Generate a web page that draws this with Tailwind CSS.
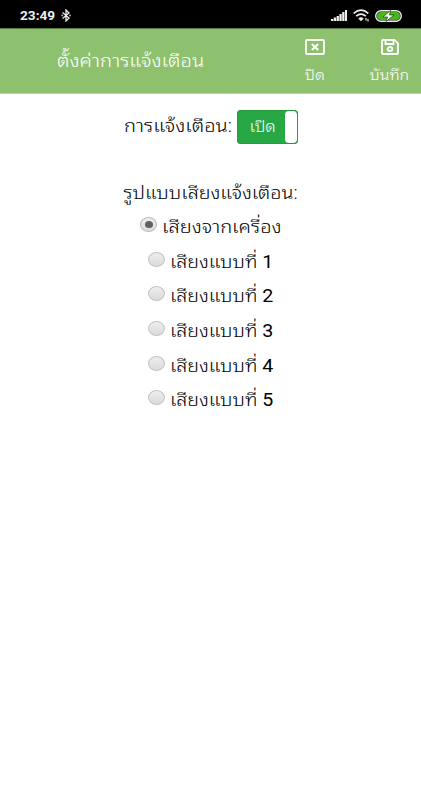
<!DOCTYPE html>
<html lang="th">
<head>
<meta charset="utf-8">
<meta name="viewport" content="width=device-width, initial-scale=1">
<title>ตั้งค่าการแจ้งเตือน</title>
<script src="https://cdn.jsdelivr.net/npm/@tailwindcss/browser@4"></script>
</head>
<body class="h-[800px] w-[421px] overflow-hidden bg-white font-['Roboto','Noto_Sans_Thai_Looped','Noto_Looped_Thai','Loma','Waree','Garuda',sans-serif] font-light text-black">
<div class="flex h-7 items-center justify-between bg-black pl-5 pr-[19px] pt-[3px] text-[#eee]">
  <div class="flex items-center gap-[5px]">
    <span class="w-[36px] whitespace-nowrap font-['Roboto'] text-[13px] font-bold leading-4"><span class="inline-block origin-left scale-x-[1.05]">23:49</span></span>
    <svg class="h-[13px] w-[10px]" viewBox="0 0 10 13" fill="none" stroke="currentColor" stroke-width="1.3"><path d="M1.5 3.5L8 9L5 12V1L8 4L1.5 9.5"/><path d="M.5 6.5h1.3M8.3 6.5h1.3" /></svg>
  </div>
  <div class="flex items-center">
    <svg class="h-[11px] w-[16px]" viewBox="0 0 16 11" fill="currentColor"><path d="M0 9h2.3v2H0zM2.8 7.5h2.3V11H2.8zM5.6 6h2.3v5H5.6zM8.4 4h2.3v7H8.4zM11.2 2h2.3v9h-2.3zM14 0h2v11h-2z"/></svg>
    <svg class="ml-[6px] h-[13px] w-[17px]" viewBox="0 0 17 13" fill="none" stroke="currentColor" stroke-width="1.7"><path d="M.7 4.4Q8 -2 15.3 4.4M3.2 7.2Q8 3 12.8 7.2"/><path d="M5.3 9.5Q8 7 10.7 9.5L8 12.3z" fill="currentColor" stroke="none"/><path d="M13 9v2.5M15 10v2.5" stroke-width="1.2"/></svg>
    <svg class="ml-[5px] h-[12px] w-[27px]" viewBox="0 0 27 12"><rect x=".7" y=".7" width="25.6" height="10.6" rx="5.3" fill="#111" stroke="#eee" stroke-width="1.4"/><rect x="2" y="2" width="23" height="8" rx="4" fill="#48b51c"/><path d="M15.5 .5L8 7h4.5l-1.5 4.5L19 5h-4.5z" fill="#fff" stroke="#173d08" stroke-width=".7"/></svg>
  </div>
</div>
<header class="flex h-[66px] border-b border-[#b5d59d] border-t border-t-[#557a3d] bg-[#8ec16d] text-white">
  <h1 class="w-[283px] pl-[57px] pt-[18px] text-[18px] leading-7 font-light whitespace-nowrap"><span class="inline-block origin-left scale-x-[1.12]">ตั้งค่าการแจ้งเตือน</span></h1>
  <button class="flex w-[63px] flex-col items-center pt-[10px]">
    <svg class="h-[16px] w-[20px]" viewBox="0 0 20 16" fill="none" stroke="currentColor"><rect x="1" y="1" width="18" height="14" rx="1" stroke-width="1.8"/><path d="M6.8 5l6.4 6M13.2 5l-6.4 6" stroke-width="2"/></svg>
    <span class="mt-[10px] text-[14px] leading-5"><span class="inline-block scale-x-[1.14]">ปิด</span></span>
  </button>
  <button class="ml-[12px] flex w-[63px] flex-col items-center pt-[10px]">
    <svg class="h-[16px] w-[18px]" viewBox="0 0 18 16" fill="none" stroke="currentColor" stroke-width="1.8"><path d="M2 1h11.5L17 4.3V14a1 1 0 0 1-1 1H2a1 1 0 0 1-1-1V2a1 1 0 0 1 1-1z"/><path d="M4.5 1v4h8V1"/><ellipse cx="9" cy="10" rx="2.4" ry="2"/></svg>
    <span class="mt-[10px] text-[14px] leading-5"><span class="inline-block scale-x-[1.14]">บันทึก</span></span>
  </button>
</header>
<main class="flex flex-col items-center">
  <div class="mt-[16px] flex h-[35px] items-start gap-[5px]">
    <span class="w-[108px] pt-[2px] text-[18px] leading-7 whitespace-nowrap"><span class="inline-block origin-left scale-x-[1.115]">การแจ้งเตือน:</span></span>
    <button class="flex h-[34px] w-[61px] overflow-hidden rounded-[3px] border border-[#239c3d] bg-[#28a745] text-white">
      <span class="w-[47px] pl-[4px] text-center text-[15px] leading-[32px]"><span class="inline-block scale-x-[1.12]">เปิด</span></span>
      <span class="h-full w-[12px] rounded-[4px] bg-white"></span>
    </button>
  </div>
  <h2 class="mt-[34px] h-[28px] text-[18px] leading-7 font-light whitespace-nowrap"><span class="inline-block scale-x-[1.095]">รูปแบบเสียงแจ้งเตือน:</span></h2>
  <div class="mt-[5px] flex flex-col items-center text-[18px]">
    <label class="flex h-[34.7px] gap-[5px] whitespace-nowrap leading-7"><span class="mt-[5px] flex h-[15px] w-[17px] items-center justify-center rounded-[50%] border border-[#bbb] bg-gradient-to-b from-[#eee] to-[#dcdcdc]"><i class="h-[7px] w-[8px] rounded-[50%] bg-[#606060]"></i></span><span class="w-[119px] pt-px"><span class="inline-block origin-left scale-x-[1.115]">เสียงจากเครื่อง</span></span></label>
    <label class="flex h-[34.7px] gap-[5px] whitespace-nowrap leading-7"><span class="mt-[5px] h-[15px] w-[17px] rounded-[50%] border border-[#c4c4c4] bg-gradient-to-b from-[#eee] to-[#dadada]"></span><span class="w-[103px] pt-px"><span class="inline-block origin-left scale-x-[1.09]">เสียงแบบที่ <span class="font-normal">1</span></span></span></label>
    <label class="flex h-[34.7px] gap-[5px] whitespace-nowrap leading-7"><span class="mt-[5px] h-[15px] w-[17px] rounded-[50%] border border-[#c4c4c4] bg-gradient-to-b from-[#eee] to-[#dadada]"></span><span class="w-[103px] pt-px"><span class="inline-block origin-left scale-x-[1.09]">เสียงแบบที่ <span class="font-normal">2</span></span></span></label>
    <label class="flex h-[34.7px] gap-[5px] whitespace-nowrap leading-7"><span class="mt-[5px] h-[15px] w-[17px] rounded-[50%] border border-[#c4c4c4] bg-gradient-to-b from-[#eee] to-[#dadada]"></span><span class="w-[103px] pt-px"><span class="inline-block origin-left scale-x-[1.09]">เสียงแบบที่ <span class="font-normal">3</span></span></span></label>
    <label class="flex h-[34.7px] gap-[5px] whitespace-nowrap leading-7"><span class="mt-[5px] h-[15px] w-[17px] rounded-[50%] border border-[#c4c4c4] bg-gradient-to-b from-[#eee] to-[#dadada]"></span><span class="w-[103px] pt-px"><span class="inline-block origin-left scale-x-[1.09]">เสียงแบบที่ <span class="font-normal">4</span></span></span></label>
    <label class="flex h-[34.7px] gap-[5px] whitespace-nowrap leading-7"><span class="mt-[5px] h-[15px] w-[17px] rounded-[50%] border border-[#c4c4c4] bg-gradient-to-b from-[#eee] to-[#dadada]"></span><span class="w-[103px] pt-px"><span class="inline-block origin-left scale-x-[1.09]">เสียงแบบที่ <span class="font-normal">5</span></span></span></label>
  </div>
</main>
</body>
</html>
